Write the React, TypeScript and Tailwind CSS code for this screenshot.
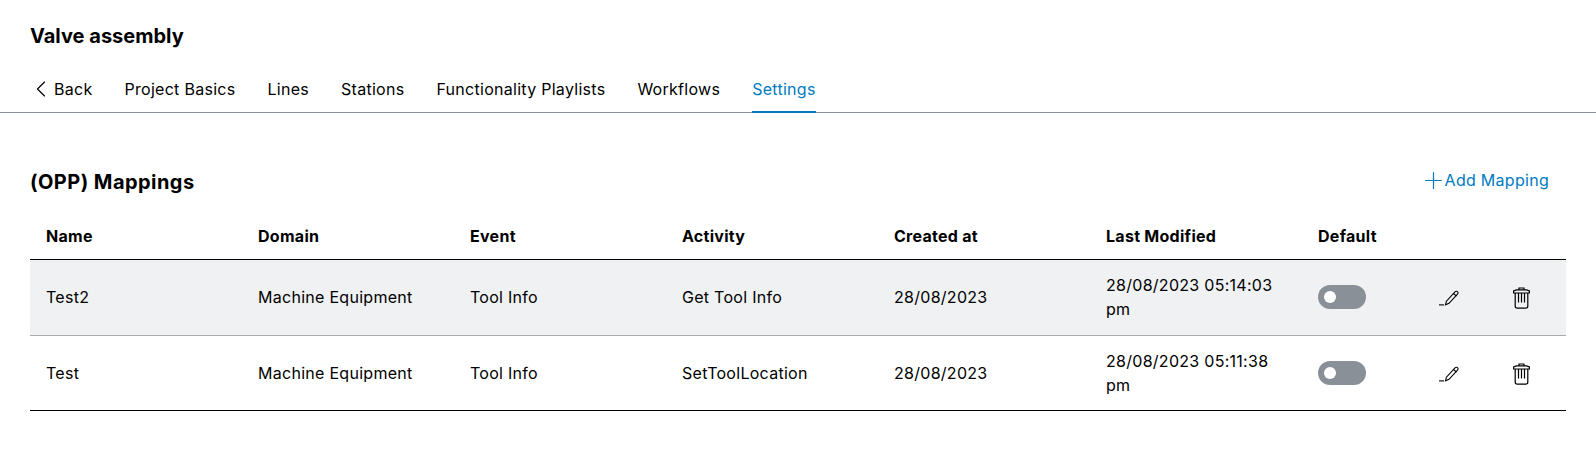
import { ChevronLeft, Plus } from "lucide-react";

const tabs = ["Project Basics", "Lines", "Stations", "Functionality Playlists", "Workflows"];

const columns = ["Name", "Domain", "Event", "Activity", "Created at", "Last Modified", "Default"];

const rows = [
  { name: "Test2", domain: "Machine Equipment", event: "Tool Info", activity: "Get Tool Info", created: "28/08/2023", modified: "28/08/2023 05:14:03 pm", shaded: true },
  { name: "Test", domain: "Machine Equipment", event: "Tool Info", activity: "SetToolLocation", created: "28/08/2023", modified: "28/08/2023 05:11:38 pm", shaded: false },
];

function PencilIcon() {
  return (
    <svg width="22" height="16" viewBox="0 0 22 16" fill="none" stroke="#000" strokeWidth="1.1">
      <path d="M0 14.900h5" />
      <path d="M6.500 14.800l.9-3.600 8.600-9.300c.7-.7 1.800-.8 2.500-.2.7.6.7 1.700 0 2.400l-8.500 9.200z" />
      <path d="M14.500 3.500l3 2.700" />
    </svg>
  );
}

function TrashIcon() {
  return (
    <svg width="17" height="22" viewBox="0 0 17 22" fill="none" stroke="#000" strokeWidth="1.2">
      <path d="M.6 6h15.800V3.900l-2.800-1H3.400L.6 3.900z" />
      <path d="M6 2.900V1h5v1.900" />
      <path d="M2.200 6v13c0 1.300.8 2.200 2 2.200h8.600c1.200 0 2-.9 2-2.200V6" />
      <path d="M5.500 6v9.500M8.500 6v9.500M11.500 6v9.500" />
    </svg>
  );
}

export default function App() {
  return (
    <div className="h-[454px] w-[1596px] bg-white font-['Inter',sans-serif] text-[16px] tracking-[0.28px] text-black">
      <div className="px-[30px] pt-[22px]">
        <h1 className="text-[20px] leading-[28px] font-bold tracking-normal">Valve assembly</h1>
      </div>

      <div className="mt-[14px] flex h-[49px] gap-[32px] border-b border-[#8a9097] px-[30px] pt-[2px]">
        <div className="flex items-center">
          <ChevronLeft size={28} strokeWidth={1} className="ml-[-3px] mr-[-1px]" />
          <span>Back</span>
        </div>
        {tabs.map((tab) => (
          <div key={tab} className="flex items-center">{tab}</div>
        ))}
        <div className="-mb-px flex items-center border-b-2 border-[#007bc0] text-[#007bc0]">Settings</div>
      </div>

      <div className="mt-[49px] flex h-[36px] items-center justify-between pl-[30px] pr-[47px]">
        <h2 className="pt-[4px] text-[20px] font-bold tracking-[0.45px]">(OPP) Mappings</h2>
        <div className="flex items-center text-[#007bc0]">
          <Plus size={27} strokeWidth={1.1} className="mr-[-2px]" />
          <span>Add Mapping</span>
        </div>
      </div>

      <div className="mt-[17px] ml-[30px] w-[1536px]">
        <div className="grid h-[45px] grid-cols-[repeat(6,212px)_1fr] items-center border-b border-black pb-[3px] font-bold">
          {columns.map((col) => (
            <div key={col} className="px-[16px]">{col}</div>
          ))}
        </div>
        {rows.map((row) => (
          <div
            key={row.name}
            className={`grid h-[75.500px] grid-cols-[repeat(6,212px)_1fr] items-center ${
              row.shaded ? "border-b border-[#a8adb3] bg-[#eff1f2]" : "border-b border-black"
            }`}
          >
            <div className="px-[16px]">{row.name}</div>
            <div className="px-[16px]">{row.domain}</div>
            <div className="px-[16px]">{row.event}</div>
            <div className="px-[16px]">{row.activity}</div>
            <div className="px-[16px]">{row.created}</div>
            <div className="px-[16px] leading-[24px]">{row.modified}</div>
            <div className="flex items-center px-[16px]">
              <div className="flex h-[24px] w-[48px] items-center rounded-full bg-[#8a9097] pl-[6px]">
                <div className="h-[12px] w-[12px] rounded-full bg-white" />
              </div>
              <div className="ml-[73px] flex items-center pt-[2px]">
                <PencilIcon />
              </div>
              <div className="ml-[52px] flex items-center pt-[2px]">
                <TrashIcon />
              </div>
            </div>
          </div>
        ))}
      </div>
    </div>
  );
}
